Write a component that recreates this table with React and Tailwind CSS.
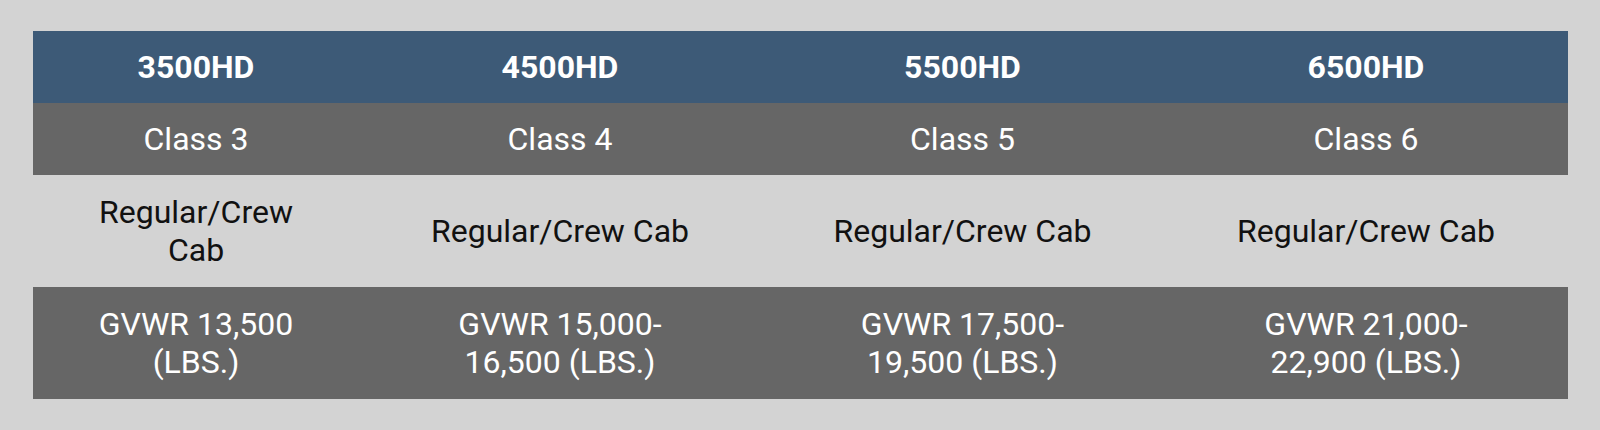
import React from 'react';

const models = [
    { name: '3500HD', cls: 'Class 3', cab: 'Regular/Crew Cab', gvwr: ['GVWR 13,500 (LBS.)'] },
    { name: '4500HD', cls: 'Class 4', cab: 'Regular/Crew Cab', gvwr: ['GVWR 15,000-', '16,500 (LBS.)'] },
    { name: '5500HD', cls: 'Class 5', cab: 'Regular/Crew Cab', gvwr: ['GVWR 17,500-', '19,500 (LBS.)'] },
    { name: '6500HD', cls: 'Class 6', cab: 'Regular/Crew Cab', gvwr: ['GVWR 21,000-', '22,900 (LBS.)'] },
];

const cols = 'grid grid-cols-[326px_402px_403px_404px]';

const Row = ({ field, className }) => (
    <div className={`${cols} ${className}`}>
        {models.map((m) => {
            const value = m[field];
            return (
                <div key={m.name} className="flex flex-col items-center justify-center text-center px-10">
                    {Array.isArray(value)
                        ? value.map((line) => <span key={line}>{line}</span>)
                        : value}
                </div>
            );
        })}
    </div>
);

export default function App() {
    return (
        <div
            className="w-[1600px] h-[430px] bg-[#d3d3d3] pt-[31px] pl-[33px]"
            style={{ fontFamily: 'Roboto, "Liberation Sans", sans-serif' }}
        >
            <div className="w-[1535px] text-[32px] leading-[38px]">
                <Row field="name" className="bg-[#3d5a77] text-white font-bold h-[72px]" />
                <Row field="cls" className="bg-[#666666] text-white h-[72px]" />
                <Row field="cab" className="text-[#111111] h-[112px]" />
                <Row field="gvwr" className="bg-[#666666] text-white h-[112px]" />
            </div>
        </div>
    );
}
